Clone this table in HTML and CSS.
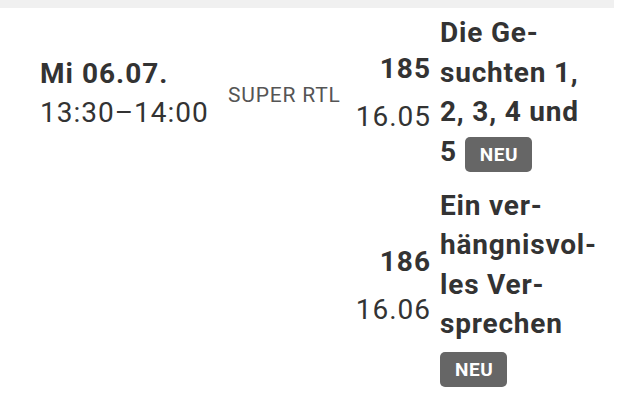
FILE: index.html
```html
<!DOCTYPE html>
<html lang="de">
<head>
<meta charset="utf-8">
<title>Sendetermine</title>
<link rel="stylesheet" href="styles.css">
</head>
<body>
<div class="schedule">
  <div class="topbar"></div>
  <div class="row first">
    <div class="when">
      <div class="date">Mi 06.07.</div>
      <div class="time">13:30–14:00</div>
    </div>
    <div class="channel">SUPER RTL</div>
    <div class="ep">
      <div class="ep-no">185</div>
      <div class="ep-date">16.05</div>
    </div>
    <div class="title">Die Ge-<br>suchten 1,<br>2, 3, 4 und<br>5 <span class="badge">NEU</span></div>
  </div>
  <div class="row second">
    <div class="when"></div>
    <div class="channel"></div>
    <div class="ep">
      <div class="ep-no">186</div>
      <div class="ep-date">16.06</div>
    </div>
    <div class="title">Ein ver-<br>hängnisvol-<br>les Ver-<br>sprechen<br><span class="badge badge-low">NEU</span></div>
  </div>
</div>
</body>
</html>
```
FILE: styles.css
```css
html, body {
  margin: 0;
  padding: 0;
  background: #ffffff;
}

body {
  font-family: Roboto, "Noto Sans", sans-serif;
  color: #333333;
}

.schedule {
  width: 614px;
}

.topbar {
  height: 8px;
  background: #f0f0f0;
}

.row {
  display: grid;
  grid-template-columns: 188px 122px 80px 174px;
  align-items: center;
  padding-left: 40px;
}

.row.first {
  padding-top: 5px;
  padding-bottom: 7px;
}

.row.second {
  padding-top: 7px;
}

.when {
  font-size: 28px;
  line-height: 39.5px;
  letter-spacing: 1px;
  padding-top: 2px;
}

.date {
  font-weight: 700;
}

.channel {
  font-size: 21px;
  line-height: 30px;
  letter-spacing: 0.8px;
  color: #555555;
  padding-top: 5px;
  white-space: nowrap;
}

.ep {
  text-align: right;
  font-size: 28px;
  line-height: 39.5px;
  letter-spacing: 1px;
  margin-right: -1px;
}

.ep-no {
  font-weight: 700;
}

.ep-date {
  margin-top: 8.5px;
}

.title {
  padding-left: 10px;
  font-size: 28px;
  line-height: 39.5px;
  letter-spacing: 0.8px;
  font-weight: 700;
  white-space: nowrap;
}

.badge {
  display: inline-block;
  background: #666666;
  color: #ffffff;
  font-size: 19px;
  line-height: 21px;
  letter-spacing: 0.6px;
  font-weight: 700;
  padding: 7px 14px 7px 15px;
  border-radius: 5px;
}

.badge-low {
  vertical-align: -3px;
}
```
